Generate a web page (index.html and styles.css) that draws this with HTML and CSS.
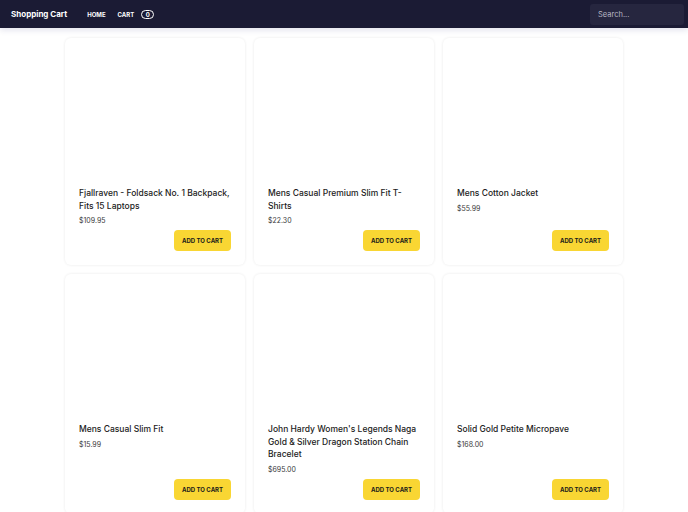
FILE: index.html
```html
<!DOCTYPE html>
<html lang="en">
<head>
<meta charset="utf-8">
<title>Shopping Cart</title>
<link rel="stylesheet" href="styles.css">
</head>
<body>
<header class="nav">
  <div class="nav-left">
    <span class="brand">Shopping Cart</span>
    <a class="nav-link" href="#">HOME</a>
    <a class="nav-link" href="#">CART <span class="badge">0</span></a>
  </div>
  <input class="search" type="text" placeholder="Search...">
</header>
<main class="grid">
  <div class="card"><div class="img"></div><h3 class="title">Fjallraven - Foldsack No. 1 Backpack, Fits 15 Laptops</h3><p class="price">$109.95</p><button class="btn">ADD TO CART</button></div>
  <div class="card"><div class="img"></div><h3 class="title">Mens Casual Premium Slim Fit T-Shirts</h3><p class="price">$22.30</p><button class="btn">ADD TO CART</button></div>
  <div class="card"><div class="img"></div><h3 class="title">Mens Cotton Jacket</h3><p class="price">$55.99</p><button class="btn">ADD TO CART</button></div>
  <div class="card"><div class="img"></div><h3 class="title">Mens Casual Slim Fit</h3><p class="price">$15.99</p><button class="btn">ADD TO CART</button></div>
  <div class="card"><div class="img"></div><h3 class="title">John Hardy Women's Legends Naga Gold &amp; Silver Dragon Station Chain Bracelet</h3><p class="price">$695.00</p><button class="btn">ADD TO CART</button></div>
  <div class="card"><div class="img"></div><h3 class="title">Solid Gold Petite Micropave</h3><p class="price">$168.00</p><button class="btn">ADD TO CART</button></div>
</main>
</body>
</html>
```
FILE: styles.css
```css
* { box-sizing: border-box; }
body {
  margin: 0;
  font-family: Inter, "Noto Sans", sans-serif;
  background: #fff;
  color: #222;
}
.nav {
  height: 28px;
  background: #1b1b34;
  display: flex;
  align-items: center;
  justify-content: space-between;
  padding: 0 4px 0 11px;
  box-shadow: 0 2px 6px rgba(40, 40, 110, 0.14);
  position: relative;
  z-index: 1;
}
.nav-left {
  display: flex;
  align-items: center;
}
.brand {
  color: #fff;
  font-weight: 700;
  font-size: 8px;
  margin-right: 20px;
}
.nav-link {
  color: #fff;
  text-decoration: none;
  font-size: 6px;
  font-weight: 700;
  margin-right: 12px;
  display: flex;
  align-items: center;
}
.badge {
  display: inline-flex;
  align-items: center;
  justify-content: center;
  margin-left: 7px;
  width: 13px;
  height: 9px;
  border: 1px solid #fff;
  border-radius: 5px;
  font-size: 6px;
}
.search {
  width: 94px;
  height: 21px;
  background: #26263f;
  border: none;
  border-radius: 3px;
  padding: 0 8px;
  color: #ddd;
  font-family: Inter, sans-serif;
  font-size: 7.5px;
  outline: none;
}
.search::placeholder { color: #b8b8c4; }
.grid {
  width: 558px;
  margin: 0 auto;
  padding-top: 10px;
  display: grid;
  grid-template-columns: repeat(3, 180px);
  gap: 9px;
}
.card {
  border-radius: 6px;
  box-shadow: 0 0 3px rgba(0, 0, 0, 0.09);
  padding: 14px;
  display: flex;
  flex-direction: column;
}
.img {
  height: 135px;
}
.title {
  margin: 0;
  font-size: 8.5px;
  line-height: 12.5px;
  font-weight: 500;
  color: #222;
}
.price {
  margin: 4px 0 4px;
  font-size: 7px;
  line-height: 10px;
  color: #3a3a3a;
}
.btn {
  margin-top: auto;
  align-self: flex-end;
  width: 57px;
  height: 21px;
  border: none;
  border-radius: 4px;
  background: #f9d633;
  font-family: Inter, sans-serif;
  font-size: 6px;
  font-weight: 700;
  color: #1a1a1a;
  padding: 0;
}
```
